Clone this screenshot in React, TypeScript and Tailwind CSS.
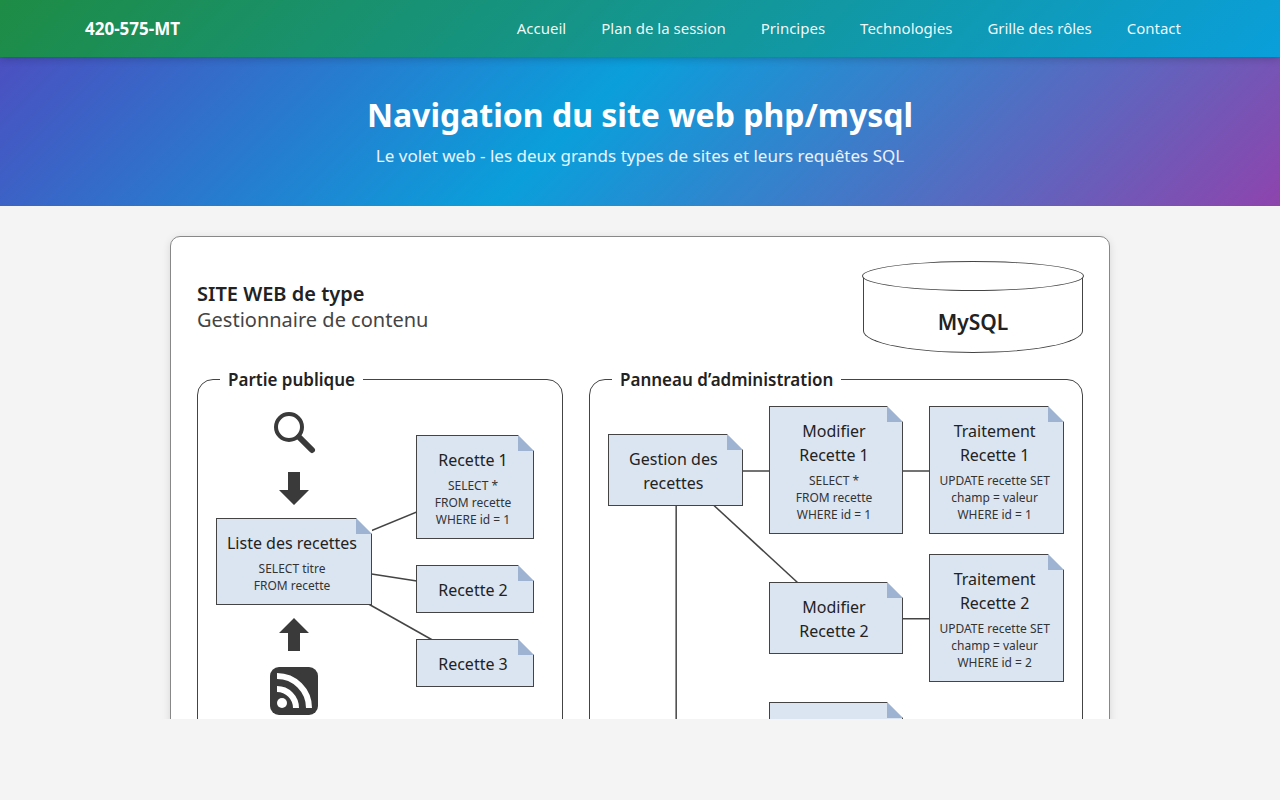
import type { ReactNode } from "react";

const links = ["Accueil", "Plan de la session", "Principes", "Technologies", "Grille des rôles", "Contact"];

function Note({ title = [], sql }: { title?: string[]; sql?: string[] }) {
  return (
    <div className="relative min-h-12 border border-[#444] bg-[#dbe5f1] pt-3 pr-1 pb-[10px] text-center">
      <svg className="absolute -top-px -right-px size-4" viewBox="0 0 16 16" aria-hidden="true">
        <path d="M0 0H16V16Z" fill="#fff" />
        <path d="M0 0V16H16Z" fill="#9db3d1" />
      </svg>
      <div className="text-base leading-6 text-[#222]">
        {title.map((line) => (
          <div key={line}>{line}</div>
        ))}
      </div>
      {sql && (
        <div className="mt-[5px] text-[12px] leading-[17px] text-[#333]">
          {sql.map((line) => (
            <div key={line} className="whitespace-nowrap">{line}</div>
          ))}
        </div>
      )}
    </div>
  );
}

function Panel({ title, children }: { title: string; children: ReactNode }) {
  return (
    <section className="relative rounded-[16px] border border-[#444] px-[18px] pb-7">
      <h2 className="absolute -top-3 left-[22px] bg-white px-2 text-[17px] leading-6 font-semibold text-[#222]">{title}</h2>
      {children}
    </section>
  );
}

function SearchIcon() {
  return (
    <svg className="size-12" viewBox="0 0 48 48" fill="none" stroke="#3a3a3a" aria-hidden="true">
      <circle cx="19" cy="19" r="13" strokeWidth="4" />
      <path d="M29 29L42 42" strokeWidth="6" strokeLinecap="round" />
    </svg>
  );
}

function RssIcon() {
  return (
    <svg className="size-12" viewBox="0 0 48 48" aria-hidden="true">
      <rect width="48" height="48" rx="9" fill="#3a3a3a" />
      <circle cx="12" cy="36" r="5" fill="#fff" />
      <path d="M7 22a19 19 0 0 1 19 19M7 9a32 32 0 0 1 32 32" fill="none" stroke="#fff" strokeWidth="6" />
    </svg>
  );
}

function Arrow({ up }: { up?: boolean }) {
  return (
    <svg className="h-[33px] w-[30px]" viewBox="0 0 30 33" fill="#3a3a3a" aria-hidden="true">
      <path d={up ? "M15 0L30 15H21V33H9V15H0Z" : "M9 0H21V18H30L15 33L0 18H9Z"} />
    </svg>
  );
}

function Database() {
  return (
    <div className="relative w-[220px] pt-[15px]">
      <div className="flex h-[77px] items-center justify-center border border-t-0 border-[#444] pt-[18px] text-[21px] font-semibold text-[#222] [border-bottom-left-radius:50%_22px] [border-bottom-right-radius:50%_22px]">
        MySQL
      </div>
      <div className="absolute top-0 -right-px -left-px h-[30px] rounded-[50%] border border-[#444] bg-white" />
    </div>
  );
}

export default function App() {
  return (
    <div className="flex h-screen flex-col bg-[#f4f4f4] pb-[81px] font-['Noto_Sans',sans-serif] text-[#222]">
      <header className="relative z-10 shrink-0 bg-[linear-gradient(135deg,#1e8c45,#0a9fdb)] px-6 shadow-[0_2px_8px_rgba(0,0,0,0.2)]">
        <div className="mx-auto flex h-[57px] max-w-[1110px] items-center justify-between">
          <a href="#accueil" className="text-[17px] font-bold text-white">420-575-MT</a>
          <nav className="flex gap-[7px] pb-px">
            {links.map((label) => (
              <a key={label} href="#" className="px-[14px] py-2 text-[15px] leading-[23px] text-white/95">{label}</a>
            ))}
          </nav>
        </div>
      </header>

      <div className="shrink-0 bg-[linear-gradient(135deg,#4b50c0,#0a9fdb_45%,#8e44ad)] px-6 pt-9 pb-[37px] text-center">
        <h1 className="text-[32px] leading-[44px] font-bold text-white">Navigation du site web php/mysql</h1>
        <p className="mt-[5px] text-[17px] leading-[27px] text-white/90">
          Le volet web - les deux grands types de sites et leurs requêtes SQL
        </p>
      </div>

      <main className="min-h-0 flex-1 overflow-hidden px-6 pt-[30px]">
        <article className="mx-auto max-w-[940px] rounded-[10px] border border-[#888] bg-white px-[26px] pt-6 pb-[26px] shadow-[0_2px_8px_rgba(0,0,0,0.12)]">
          <div className="flex items-center justify-between">
            <div className="text-xl leading-[26px]">
              <div className="font-semibold">SITE WEB de type</div>
              <div className="text-[#444]">Gestionnaire de contenu</div>
            </div>
            <Database />
          </div>

          <div className="mt-[26px] grid grid-cols-[366fr_494fr] gap-[26px]">
            <Panel title="Partie publique">
              <div className="relative mt-7 flex items-start gap-11">
                <svg className="absolute inset-0 size-full" stroke="#444" strokeWidth="1.5" aria-hidden="true">
                  <line x1="78" y1="154.5" x2="259" y2="80" />
                  <line x1="78" y1="154" x2="259" y2="182" />
                  <line x1="78" y1="154" x2="259" y2="256" />
                </svg>
                <div className="relative flex w-[156px] flex-col items-center">
                  <SearchIcon />
                  <div className="mt-4 mb-[13px]">
                    <Arrow />
                  </div>
                  <div className="w-full">
                    <Note title={["Liste des recettes"]} sql={["SELECT titre", "FROM recette"]} />
                  </div>
                  <div className="mt-[13px] mb-4">
                    <Arrow up />
                  </div>
                  <RssIcon />
                </div>
                <div className="relative mt-[27px] flex w-[118px] flex-col gap-[26px]">
                  <Note title={["Recette 1"]} sql={["SELECT *", "FROM recette", "WHERE id = 1"]} />
                  <Note title={["Recette 2"]} />
                  <Note title={["Recette 3"]} />
                </div>
              </div>
            </Panel>

            <Panel title="Panneau d’administration">
              <div className="relative mt-[26px] grid grid-cols-3 items-center gap-x-[26px] gap-y-5">
                <svg className="absolute inset-0 size-full" stroke="#444" strokeWidth="1.5" aria-hidden="true">
                  <line x1="14.8%" y1="65" x2="85.2%" y2="65" />
                  <line x1="14.8%" y1="64" x2="50%" y2="212" />
                  <line x1="50%" y1="212.75" x2="85.2%" y2="212.75" />
                  <line x1="14.95%" y1="64" x2="14.95%" y2="332" />
                  <line x1="14.95%" y1="332" x2="50%" y2="332" />
                </svg>
                <Note title={["Gestion des", "recettes"]} />
                <Note title={["Modifier", "Recette 1"]} sql={["SELECT *", "FROM recette", "WHERE id = 1"]} />
                <Note title={["Traitement", "Recette 1"]} sql={["UPDATE recette SET", "champ = valeur", "WHERE id = 1"]} />
                <div className="col-start-2">
                  <Note title={["Modifier", "Recette 2"]} />
                </div>
                <Note title={["Traitement", "Recette 2"]} sql={["UPDATE recette SET", "champ = valeur", "WHERE id = 2"]} />
                <div className="col-start-2">
                  <Note />
                </div>
              </div>
            </Panel>
          </div>
        </article>
      </main>
    </div>
  );
}
